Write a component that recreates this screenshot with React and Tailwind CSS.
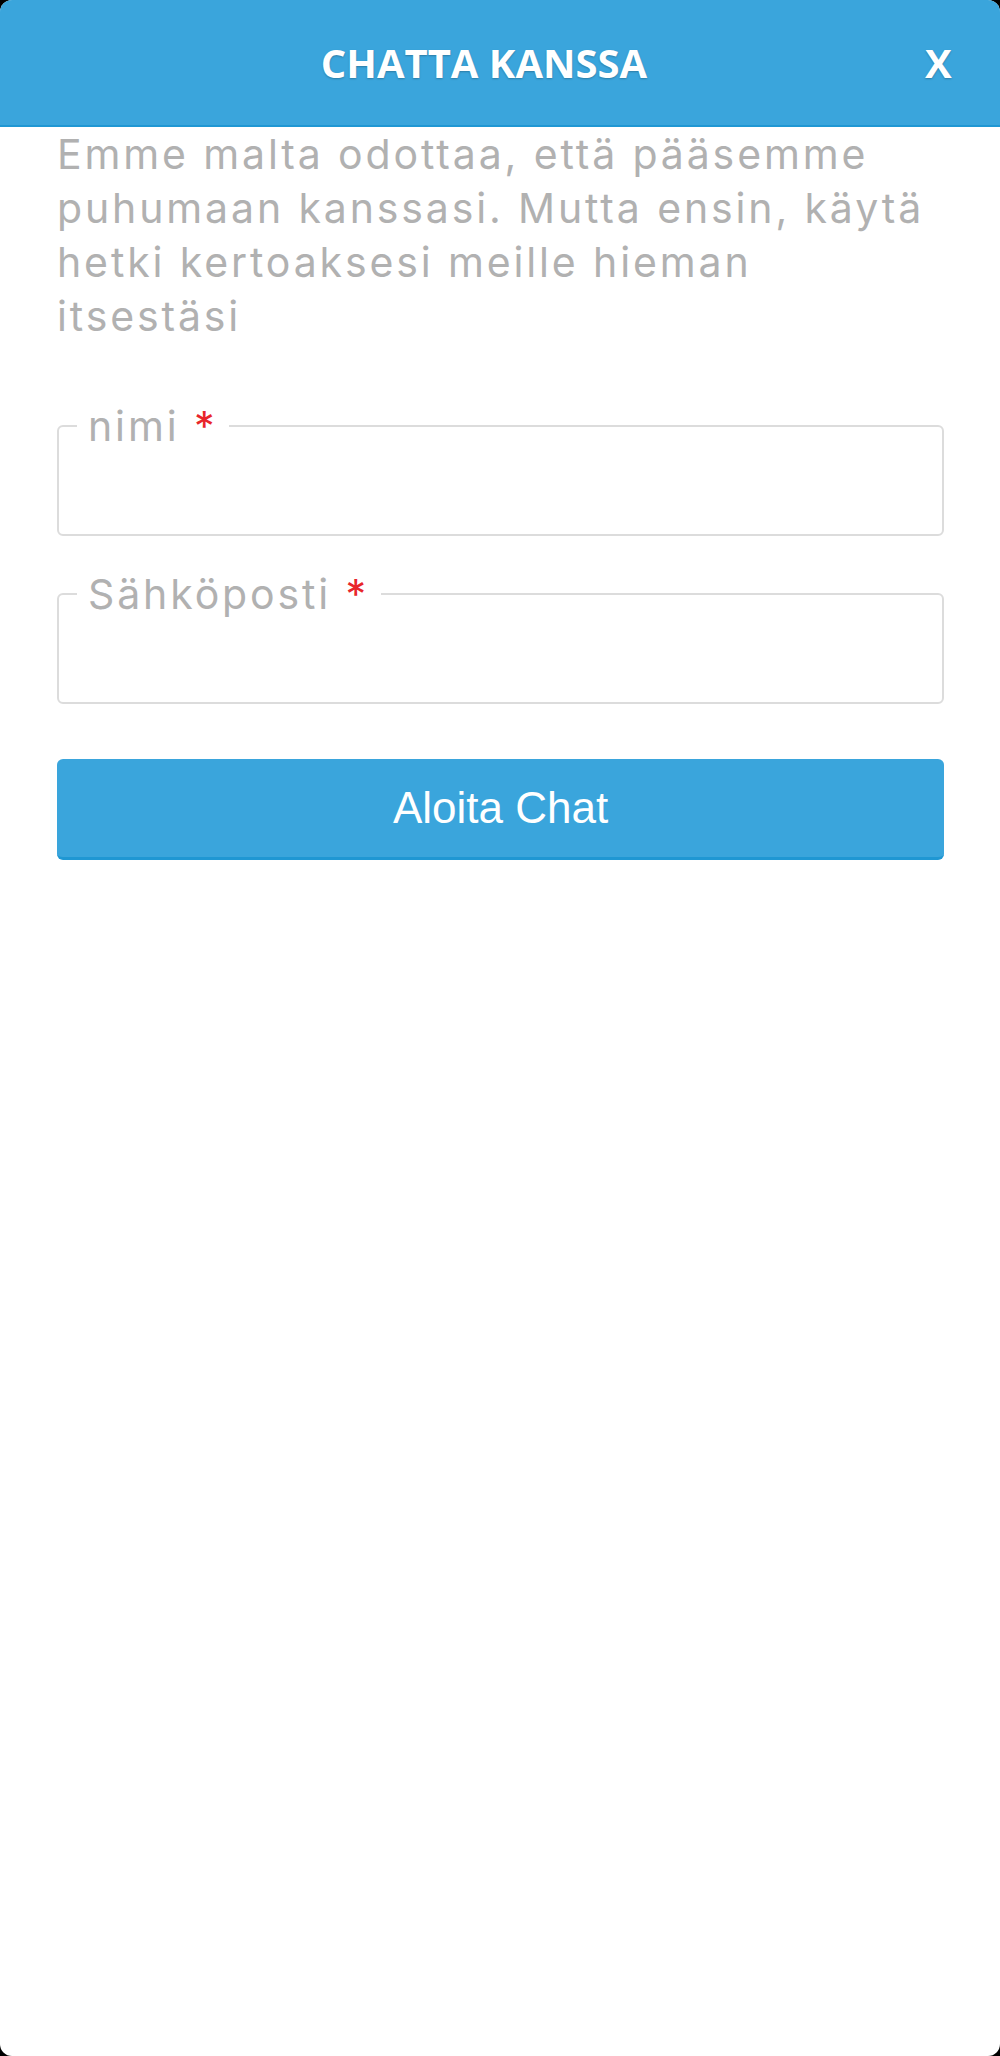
const Field = ({ label }) => (
    <fieldset className="rounded-[6px] border-2 border-[#dcdcdc]">
        <legend className="ml-[18px] pl-[11px] pr-[12px] text-[41px] leading-[38px] tracking-[0.07em] text-[#b1b1b1]">
            {label} <span className="text-[#e8262b]">*</span>
        </legend>
        <input className="block h-[89px] w-full bg-transparent px-[20px] outline-none" />
    </fieldset>
);

export default function App() {
    return (
        <div className="h-[2056px] w-full bg-black">
            <div className="flex h-full flex-col overflow-hidden rounded-[12px] bg-white font-['Inter',sans-serif]">
                {/* Header */}
                <div className="flex h-[127px] shrink-0 items-center border-b-2 border-[#1f97d3] bg-[#3aa5dc] pl-[50px] pr-[50px]">
                    <h1 className="flex-1 text-center font-['Open_Sans',sans-serif] text-[40px] font-bold text-white [text-shadow:0_1px_2px_rgba(0,0,0,0.25)]">
                        CHATTA KANSSA
                    </h1>
                    <button className="ml-[7px] w-[25px] font-['Open_Sans',sans-serif] text-[40px] font-bold leading-none text-white [text-shadow:0_1px_2px_rgba(0,0,0,0.25)]">
                        X
                    </button>
                </div>

                {/* Body */}
                <div className="flex flex-col pl-[57px] pr-[56px]">
                    <p className="whitespace-nowrap text-[41px] leading-[54px] tracking-[0.07em] text-[#b1b1b1]">
                        Emme malta odottaa, että pääsemme
                        <br />
                        puhumaan kanssasi. Mutta ensin, käytä
                        <br />
                        hetki kertoaksesi meille hieman
                        <br />
                        itsestäsi
                    </p>

                    <div className="mt-[64px]">
                        <Field label="nimi" />
                    </div>
                    <div className="mt-[39px]">
                        <Field label="Sähköposti" />
                    </div>

                    <button className="mt-[55px] h-[101px] w-full rounded-[6px] border-b-[3px] border-[#1f97d3] bg-[#3aa5dc] font-['Liberation_Sans',Arial,sans-serif] text-[44px] text-white">
                        Aloita Chat
                    </button>
                </div>
            </div>
        </div>
    );
}
